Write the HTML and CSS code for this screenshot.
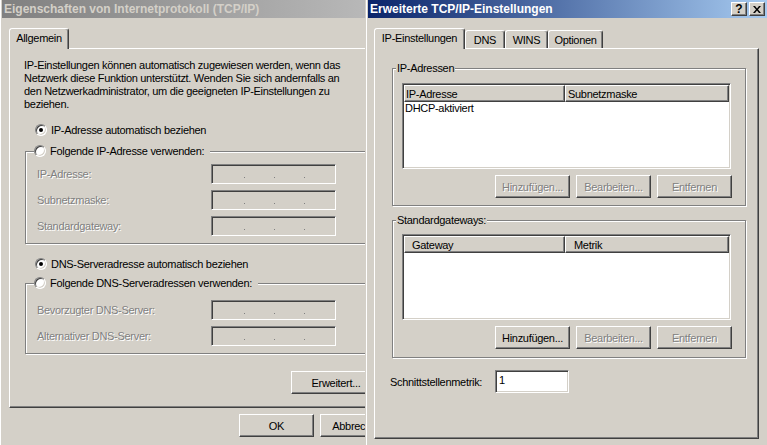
FILE: index.html
```html
<!DOCTYPE html>
<html lang="de">
<head>
<meta charset="utf-8">
<title>TCP/IP</title>
<link rel="stylesheet" href="styles.css">
</head>
<body>
<div class="desktop">

  <div class="win win-left">
    <div class="titlebar inactive"><span class="title">Eigenschaften von Internetprotokoll (TCP/IP)</span></div>
    <div class="body body-l">
      <div class="tabs"><div class="tab sel t-allg">Allgemein</div></div>
      <div class="panel panel-l">
        <p class="intro">IP-Einstellungen können automatisch zugewiesen werden, wenn das<br>Netzwerk diese Funktion unterstützt. Wenden Sie sich andernfalls an<br>den Netzwerkadministrator, um die geeigneten IP-Einstellungen zu<br>beziehen.</p>
        <div class="radio r1"><span class="rb on"></span><span>IP-Adresse automatisch beziehen</span></div>
        <fieldset class="grp grp-l g1">
          <legend class="rleg"><span class="radio"><span class="rb"></span><span>Folgende IP-Adresse verwenden:</span></span></legend>
          <div class="rows rows-1">
            <div class="row"><span class="lbl dis">IP-Adresse:</span><span class="ipf"><i></i><i></i><i></i></span></div>
            <div class="row"><span class="lbl dis">Subnetzmaske:</span><span class="ipf"><i></i><i></i><i></i></span></div>
            <div class="row"><span class="lbl dis">Standardgateway:</span><span class="ipf"><i></i><i></i><i></i></span></div>
          </div>
        </fieldset>
        <div class="radio r3"><span class="rb on"></span><span>DNS-Serveradresse automatisch beziehen</span></div>
        <fieldset class="grp grp-l g2">
          <legend class="rleg"><span class="radio"><span class="rb"></span><span>Folgende DNS-Serveradressen verwenden:</span></span></legend>
          <div class="rows rows-2">
            <div class="row"><span class="lbl dis">Bevorzugter DNS-Server:</span><span class="ipf"><i></i><i></i><i></i></span></div>
            <div class="row"><span class="lbl dis">Alternativer DNS-Server:</span><span class="ipf"><i></i><i></i><i></i></span></div>
          </div>
        </fieldset>
        <div class="erw-row"><button class="btn btn-erw">Erweitert...</button></div>
      </div>
      <div class="dlgbtns"><button class="btn">OK</button><button class="btn">Abbrechen</button></div>
    </div>
  </div>

  <div class="win win-right">
    <div class="titlebar active">
      <span class="title">Erweiterte TCP/IP-Einstellungen</span>
      <div class="cbtns">
        <span class="cbtn q">?</span>
        <span class="cbtn"><svg width="8" height="7" viewBox="0 0 8 7"><path d="M0 0h2l2 2.4L6 0h2L5 3.5 8 7H6L4 4.6 2 7H0l3-3.5z" fill="#000"/></svg></span>
      </div>
    </div>
    <div class="body body-r">
      <div class="tabs">
        <div class="tab sel t-ip">IP-Einstellungen</div>
        <div class="tab t-dns">DNS</div>
        <div class="tab t-wins">WINS</div>
        <div class="tab t-opt">Optionen</div>
      </div>
      <div class="panel panel-r">
        <fieldset class="grp grp-r gr1">
          <legend class="tleg">IP-Adressen</legend>
          <div class="gin gin-1">
            <div class="list">
              <div class="lhead">
                <span class="hc hc1">IP-Adresse</span>
                <span class="hc hc2">Subnetzmaske</span>
              </div>
              <div class="lrow">DHCP-aktiviert</div>
            </div>
            <div class="btnrow">
              <button class="btn dis">Hinzufügen...</button>
              <button class="btn dis">Bearbeiten...</button>
              <button class="btn dis">Entfernen</button>
            </div>
          </div>
        </fieldset>
        <fieldset class="grp grp-r gr2">
          <legend class="tleg">Standardgateways:</legend>
          <div class="gin gin-2">
            <div class="list">
              <div class="lhead">
                <span class="hc hc1 wide">Gateway</span>
                <span class="hc hc2 wide">Metrik</span>
              </div>
            </div>
            <div class="btnrow btnrow-2">
              <button class="btn">Hinzufügen...</button>
              <button class="btn dis">Bearbeiten...</button>
              <button class="btn dis">Entfernen</button>
            </div>
          </div>
        </fieldset>
        <div class="metric">
          <span class="mlbl">Schnittstellenmetrik:</span>
          <span class="tinput">1</span>
        </div>
      </div>
    </div>
  </div>

</div>
</body>
</html>
```

FILE: styles.css
```css
* { box-sizing: border-box; margin: 0; padding: 0; }
body {
  margin: 0;
  background: #d4d0c8;
  font-family: "Liberation Sans", Arial, sans-serif;
  font-size: 11px;
  letter-spacing: -0.3px;
  color: #000;
}
.desktop {
  position: relative;
  width: 767px;
  height: 445px;
  overflow: hidden;
  background: #d4d0c8;
}

/* windows */
.win {
  position: absolute;
  background: #d4d0c8;
  border: 1px solid;
  border-color: #d4d0c8 #404040 #404040 #d4d0c8;
  box-shadow: inset 1px 1px #fff, inset -1px -1px #808080;
  padding: 2px;
}
.win-left { left: -1px; top: -3px; width: 420px; height: 460px; }
.win-right { left: 365px; top: -3px; width: 405px; height: 460px; }

.titlebar {
  height: 18px;
  display: flex;
  align-items: center;
  padding: 0 2px;
}
.inactive { background: linear-gradient(to right, #808080, #c0c0c0); color: #d4d0c8; }
.active { background: linear-gradient(to right, #0a246a, #a6caf0); color: #fff; }
.title {
  font-weight: bold;
  font-size: 12px;
  letter-spacing: 0;
  white-space: nowrap;
}
.cbtns { margin-left: auto; display: flex; gap: 2px; }
.cbtn {
  width: 16px;
  height: 14px;
  background: #d4d0c8;
  border: 1px solid;
  border-color: #fff #404040 #404040 #fff;
  box-shadow: inset -1px -1px #808080;
  display: flex;
  align-items: center;
  justify-content: center;
  color: #000;
}
.cbtn.q { font-weight: bold; font-size: 12px; letter-spacing: 0; line-height: 12px; }

.body-l { padding: 10px 0 0 7px; }
.body-r { padding: 10px 0 0 6px; }

/* tabs */
.tabs {
  display: flex;
  align-items: flex-end;
  height: 20px;
}
.tab {
  height: 18px;
  border: 1px solid;
  border-bottom: none;
  border-color: #fff #404040 transparent #fff;
  box-shadow: inset -1px 0 #808080;
  border-radius: 3px 3px 0 0;
  background: #d4d0c8;
  display: flex;
  align-items: center;
  justify-content: center;
  white-space: nowrap;
}
.tab.sel {
  height: 21px;
  margin-bottom: -1px;
  position: relative;
  z-index: 2;
  padding-bottom: 2px;
}
.t-allg { width: 60px; }
.t-ip { width: 91px; }
.t-dns { width: 40px; }
.t-wins { width: 43px; }
.t-opt { width: 55px; }

.panel {
  border: 1px solid;
  border-color: #fff #404040 #404040 #fff;
  box-shadow: inset -1px -1px #808080;
}
.panel-l { width: 390px; height: 360px; padding: 10px 0 0 14px; }
.panel-r { width: 385px; height: 391px; padding: 11px 0 0 15px; }

.intro { line-height: 13px; white-space: nowrap; }

/* radio */
.radio {
  display: flex;
  align-items: center;
  gap: 4px;
  height: 16px;
  white-space: nowrap;
}
.rb {
  position: relative;
  width: 12px;
  height: 12px;
  flex: none;
  border-radius: 50%;
  background: #fff;
  border: 1px solid;
  border-color: #808080 #fff #fff #808080;
  box-shadow: inset 1px 1px #404040, inset -1px -1px #d4d0c8;
}
.rb.on::after {
  content: "";
  position: absolute;
  left: 3px;
  top: 3px;
  width: 4px;
  height: 4px;
  border-radius: 50%;
  background: #000;
}
.r1 { margin: 11px 0 0 11px; }
.r3 { margin: 12px 0 0 11px; }

/* group boxes */
.grp {
  border: 1px solid #808080;
  box-shadow: inset 1px 1px #fff, 1px 1px #fff;
  padding: 0;
  min-width: 0;
}
.grp legend { background: #d4d0c8; line-height: 16px; }
.grp-l { width: 360px; margin-left: 1px; }
.g1 { margin-top: 5px; }
.g2 { margin-top: 3px; }
.rleg { margin-left: 8px; padding: 0 6px 0 0; }
.tleg { margin-left: 3px; padding: 0 1px; white-space: nowrap; }

.rows { display: flex; flex-direction: column; gap: 6px; padding: 5px 0 7px 11px; }
.rows-2 { padding-top: 9px; }
.row { display: flex; align-items: center; height: 20px; }
.lbl { width: 174px; white-space: nowrap; }
.dis { color: #808080; text-shadow: 1px 1px 0 #fff; }

.ipf {
  width: 125px;
  height: 20px;
  display: flex;
  gap: 29px;
  padding: 12px 0 0 32px;
  border: 1px solid;
  border-color: #808080 #fff #fff #808080;
  box-shadow: inset 1px 1px #404040, inset -1px -1px #d4d0c8;
  background: #d4d0c8;
}
.ipf i { display: block; width: 1px; height: 1px; background: #808080; }

/* buttons */
.btn {
  width: 75px;
  height: 23px;
  font: inherit;
  letter-spacing: inherit;
  color: #000;
  background: #d4d0c8;
  border: 1px solid;
  border-color: #fff #404040 #404040 #fff;
  box-shadow: inset -1px -1px #808080;
  display: flex;
  align-items: center;
  justify-content: center;
  white-space: nowrap;
}
.btn.dis { color: #808080; text-shadow: 1px 1px 0 #fff; }
.erw-row { display: flex; justify-content: flex-end; margin: 17px 17px 0 0; }
.btn-erw { width: 90px; }
.dlgbtns {
  display: flex;
  justify-content: flex-end;
  gap: 6px;
  width: 390px;
  padding-right: 4px;
  margin-top: 6px;
}

/* right side groups */
.grp-r { width: 354px; margin-left: 2px; }
.gr2 { margin-top: 6px; }
.gin { padding: 7px 13px 7px 9px; display: flex; flex-direction: column; gap: 6px; }
.gin-2 { padding-top: 6px; padding-bottom: 8px; }

.list {
  width: 329px;
  height: 86px;
  background: #fff;
  border: 1px solid;
  border-color: #808080 #fff #fff #808080;
  box-shadow: inset 1px 1px #404040, inset -1px -1px #d4d0c8;
  padding: 1px;
}
.lhead { display: flex; height: 17px; }
.hc {
  height: 17px;
  background: #d4d0c8;
  border: 1px solid;
  border-color: #fff #404040 #404040 #fff;
  box-shadow: inset -1px -1px #808080;
  display: flex;
  align-items: center;
  padding-left: 1px;
  white-space: nowrap;
}
.hc1 { width: 161px; }
.hc2 { width: 164px; padding-left: 2px; }
.hc1.wide { padding-left: 7px; }
.hc2.wide { padding-left: 8px; }
.lrow { line-height: 13px; padding-left: 1px; white-space: nowrap; }

.btnrow { display: flex; justify-content: flex-end; gap: 6px; }

.metric { display: flex; align-items: center; margin-top: 12px; }
.mlbl { width: 105px; white-space: nowrap; }
.tinput {
  width: 74px;
  height: 23px;
  background: #fff;
  border: 1px solid;
  border-color: #808080 #fff #fff #808080;
  box-shadow: inset 1px 1px #404040, inset -1px -1px #d4d0c8;
  padding: 2px 0 0 3px;
  line-height: 14px;
}
```
